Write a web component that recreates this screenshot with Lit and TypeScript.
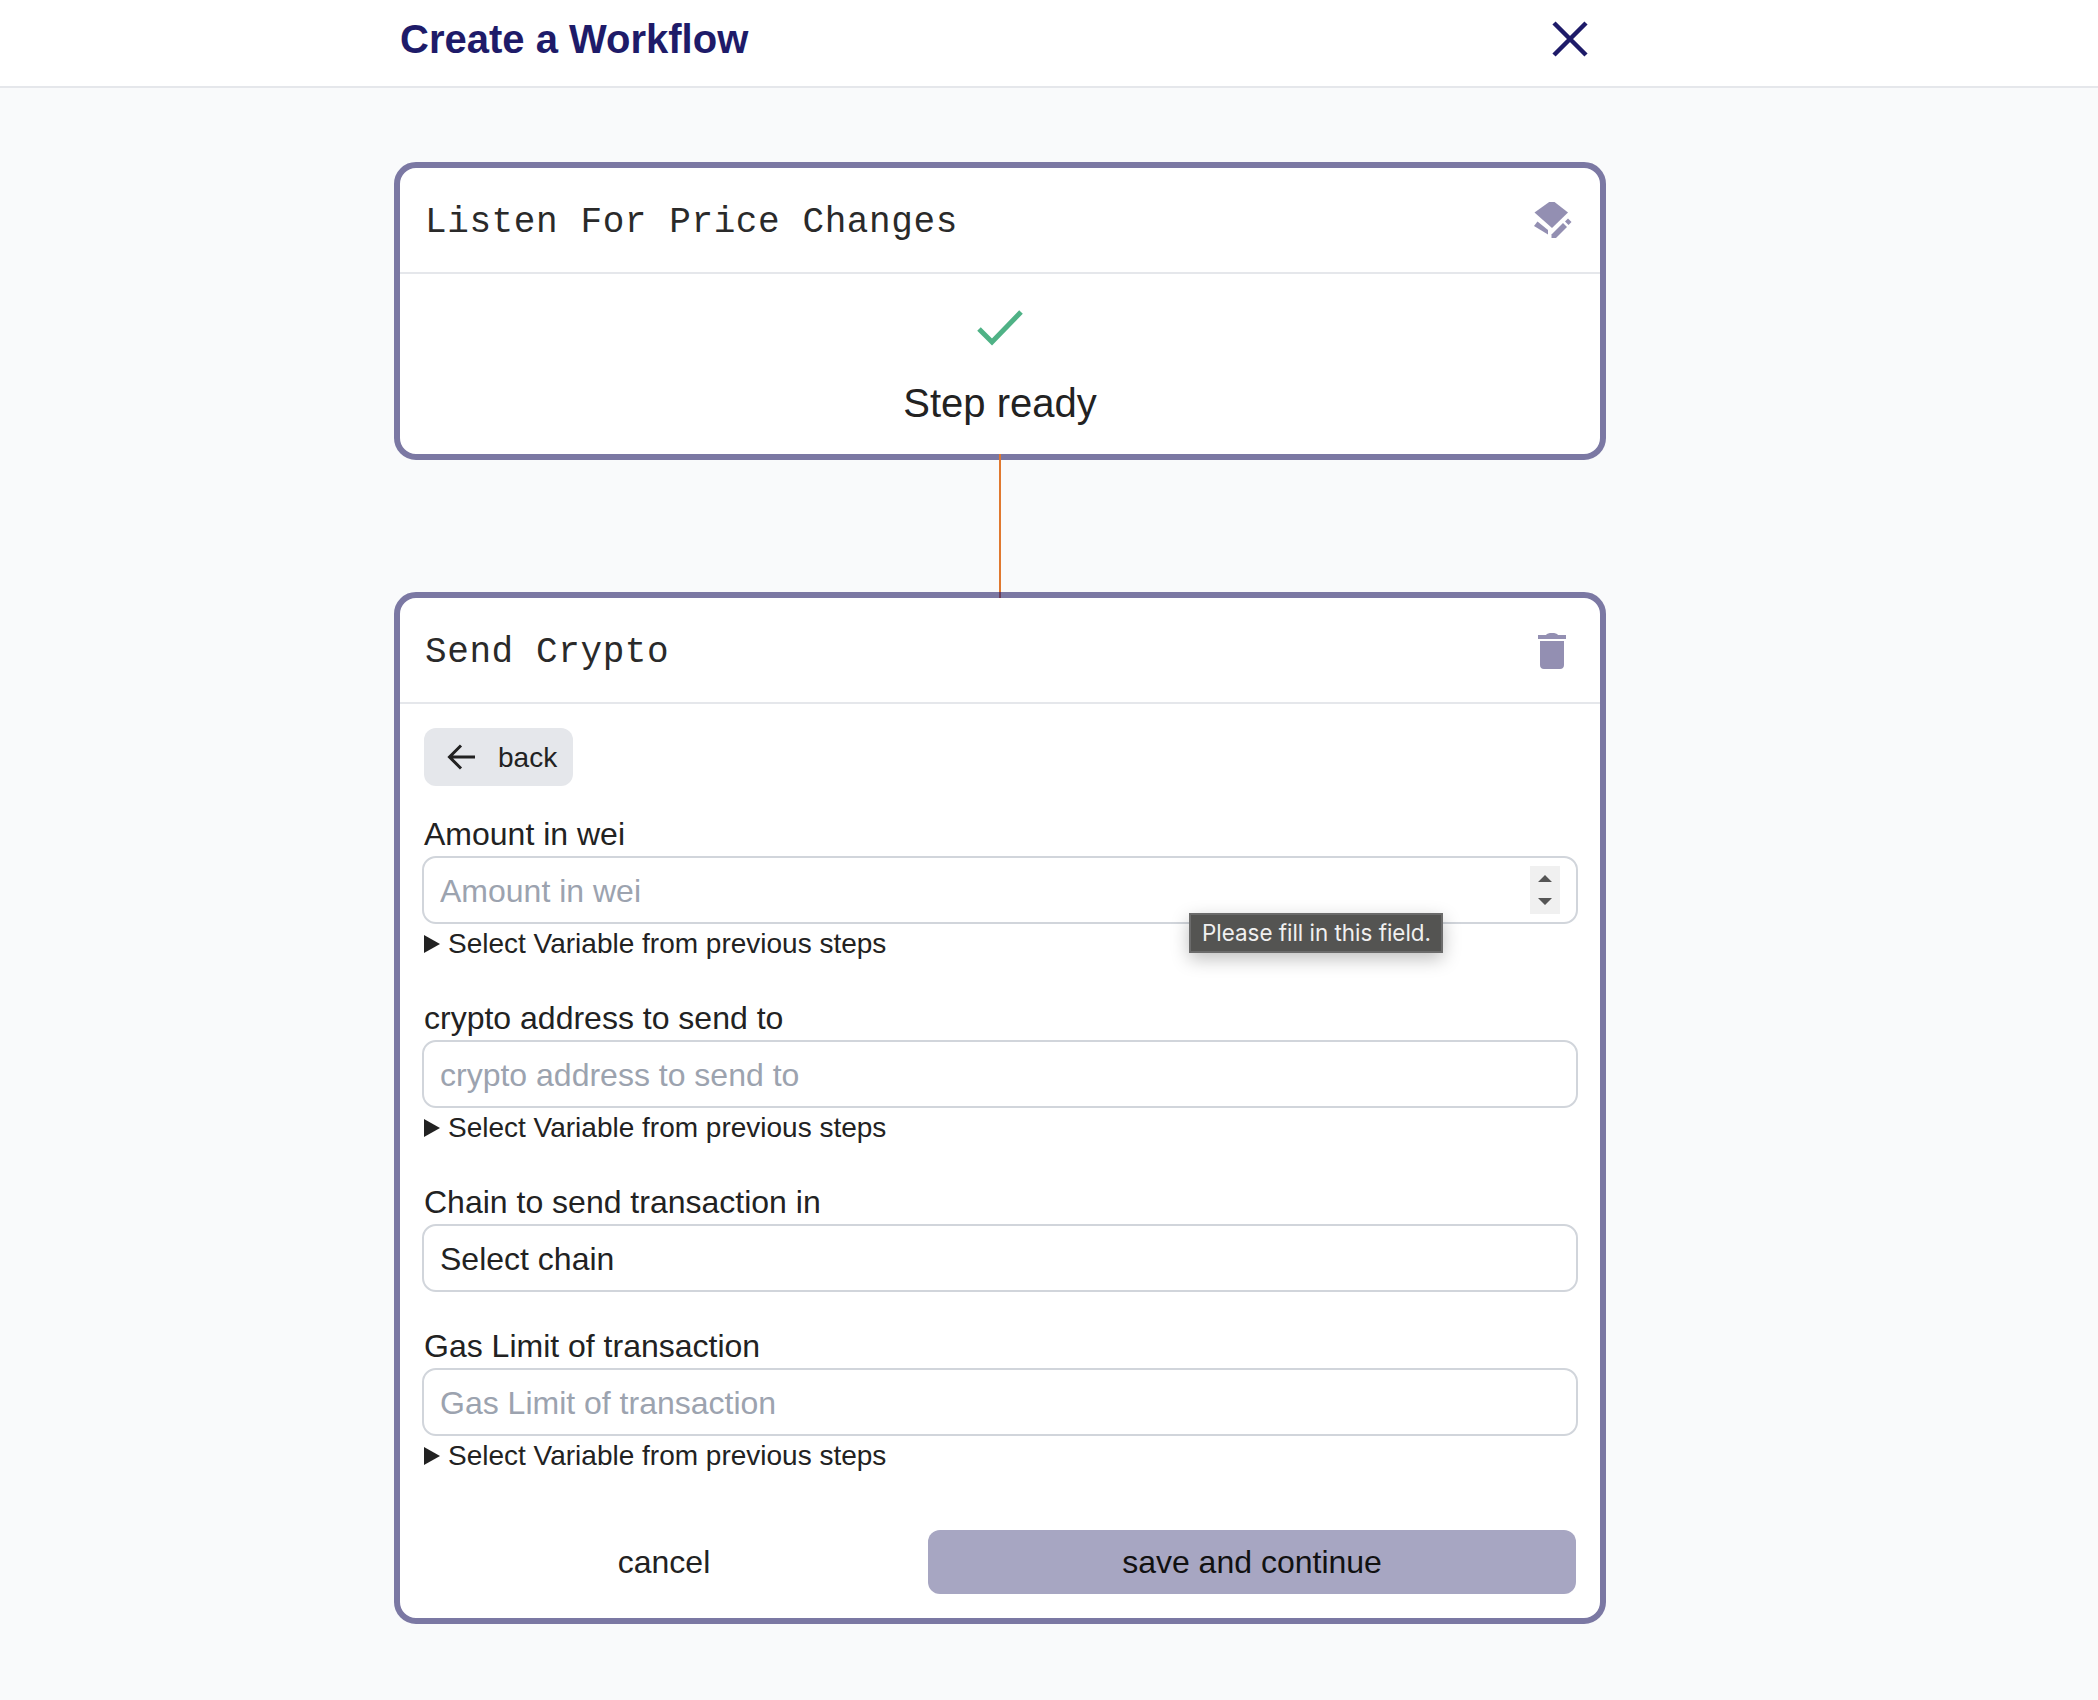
import { LitElement, html, css } from "lit";
import { customElement } from "lit/decorators.js";

const summary = html`<details class="vars"><summary>Select Variable from previous steps</summary></details>`;

@customElement("app-root")
export class AppRoot extends LitElement {
  static styles = css`
    :host {
      display: block;
      min-height: 1700px;
      background: #f9fafb;
      font-family: "Liberation Sans", Arial, sans-serif;
      color: #222;
    }
    * { box-sizing: border-box; }
    .top {
      height: 88px;
      background: #fff;
      border-bottom: 2px solid #e5e7eb;
      padding: 0 492px 8px 400px;
      display: flex;
      align-items: center;
      justify-content: space-between;
    }
    h1 {
      margin: 0;
      font-size: 40px;
      font-weight: 700;
      line-height: 76px;
      color: #1e1b69;
    }
    .close { display: block; width: 40px; height: 40px; margin-right: 16px; }
    main { width: 1212px; margin-left: 394px; padding-top: 74px; }
    .card {
      background: #fff;
      border: 6px solid #7b78a3;
      border-radius: 22px;
    }
    .head {
      height: 106px;
      border-bottom: 2px solid #e5e7eb;
      display: flex;
      align-items: center;
      justify-content: space-between;
      padding: 0 28px 0 25px;
    }
    .head h2 {
      margin: 4px 0 0;
      font-family: "Liberation Mono", monospace;
      font-weight: 400;
      font-size: 36px;
      letter-spacing: 0.6px;
      color: #2a2a2a;
    }
    .head .icon { margin-top: 3px; }
    .ready {
      height: 180px;
      display: flex;
      flex-direction: column;
      align-items: center;
      padding-top: 36px;
    }
    .ready svg { display: block; width: 48px; height: 40px; }
    .ready p { margin: 23px 0 0; font-size: 40px; line-height: 60px; }
    .link { height: 132px; position: relative; }
    .link i {
      position: absolute;
      left: 605px;
      top: -6px;
      width: 2px;
      height: 138px;
      background: #e0782f;
    }
    .link b {
      position: absolute;
      left: 605px;
      bottom: -6px;
      width: 2px;
      height: 6px;
      background: #6b3d5a;
      z-index: 1;
    }
    .form { padding: 24px 24px 24px; }
    .back {
      display: flex;
      align-items: center;
      width: 149px;
      height: 58px;
      border: 0;
      border-radius: 12px;
      background: #e5e7eb;
      padding: 2px 0 0 23px;
      font: 28px "Liberation Sans", Arial, sans-serif;
      color: #222;
      gap: 21px;
      margin-bottom: 24px;
    }
    .back svg { display: block; width: 30px; height: 30px; margin-top: -2px; }
    .field { position: relative; margin-bottom: 30px; }
    label { display: block; font-size: 32px; line-height: 48px; height: 46px; }
    .ctl {
      display: block;
      width: 1156px;
      height: 68px;
      margin-left: -2px;
      border: 2px solid #d1d5db;
      border-radius: 14px;
      background: #fff;
      padding: 2px 16px 0;
      font: 32px "Liberation Sans", Arial, sans-serif;
      color: #222;
      outline: none;
      appearance: none;
    }
    .ctl::placeholder { color: #9ca3af; opacity: 1; }
    .vars { font-size: 28px; line-height: 40px; height: 40px; }
    summary { cursor: pointer; list-style: none; display: flex; align-items: center; gap: 8px; }
    summary::-webkit-details-marker { display: none; }
    summary::before {
      content: "";
      width: 16px;
      height: 18px;
      background: #222;
      clip-path: polygon(0 0, 100% 50%, 0 100%);
    }
    .spin {
      position: absolute;
      left: 1106px;
      top: 56px;
      width: 30px;
      height: 48px;
      background: #f0f0f0;
    }
    .spin svg { display: block; width: 30px; height: 48px; }
    .tip {
      position: absolute;
      left: 765px;
      top: 103px;
      width: 254px;
      height: 40px;
      background: #545452;
      border: 2px solid #6b6b6b;
      color: #f0f0f0;
      font: 22.4px/36px Inter, sans-serif;
      padding-left: 11px;
      white-space: nowrap;
      box-shadow: 0 6px 18px rgba(0, 0, 0, 0.25);
    }
    .foot { display: flex; gap: 24px; margin-top: 54px; }
    .foot button {
      height: 64px;
      border: 0;
      border-radius: 12px;
      background: transparent;
      font: 32px "Liberation Sans", Arial, sans-serif;
      color: #222;
      padding: 0;
    }
    .foot .cancel { width: 480px; }
    .foot .save { width: 648px; background: #a7a6c2; color: #111; }
    .field.last { margin-bottom: 0; }
    .icon { display: block; width: 40px; height: 40px; }
  `;

  render() {
    return html`
      <div class="top">
        <h1>Create a Workflow</h1>
        <svg class="close" viewBox="0 0 40 40" fill="none" stroke="#1e1b69" stroke-width="4.5">
          <path d="M4 4 36 36M36 4 4 36" />
        </svg>
      </div>
      <main>
        <section class="card">
          <div class="head">
            <h2>Listen For Price Changes</h2>
            <svg class="icon" viewBox="-1 3 40 40" fill="#938fb2">
              <polygon points="19,1 35,13.500 19,29 1.500,13.500" />
              <polygon points="1,27 4.500,22.500 15,31 15,35.500" />
              <polygon points="18.500,35.500 30,24 34,28 23,39 18.500,39" />
              <polygon points="32,22.500 35,19.500 38.500,23 35.500,26" />
            </svg>
          </div>
          <div class="ready">
            <svg viewBox="0 0 48 40" fill="none" stroke="#4fb286" stroke-width="5">
              <path d="M3 19 16 32 45 2" />
            </svg>
            <p>Step ready</p>
          </div>
        </section>
        <div class="link"><i></i><b></b></div>
        <section class="card">
          <div class="head">
            <h2>Send Crypto</h2>
            <svg class="icon" viewBox="0 0 40 40" fill="#938fb2">
              <path d="M6 3H14C15 1.500 17 1 20 1S25 1.500 26 3H34V7H6ZM8 9H32V33C32 35.500 30.500 37 28 37H12C9.500 37 8 35.500 8 33Z" />
            </svg>
          </div>
          <div class="form">
            <button class="back">
              <svg viewBox="0 0 30 30" fill="none" stroke="#222" stroke-width="3">
                <path d="M28 15H3M14 3.500 2.500 15 14 26.500" />
              </svg>
              back
            </button>
            <div class="field">
              <label>Amount in wei</label>
              <input class="ctl" type="number" placeholder="Amount in wei" />
              ${summary}
              <div class="spin">
                <svg viewBox="0 0 30 48" fill="#555">
                  <path d="M8 16 15 9 22 16ZM8 32 22 32 15 39Z" />
                </svg>
              </div>
              <div class="tip">Please fill in this field.</div>
            </div>
            <div class="field">
              <label>crypto address to send to</label>
              <input class="ctl" type="text" placeholder="crypto address to send to" />
              ${summary}
            </div>
            <div class="field">
              <label>Chain to send transaction in</label>
              <select class="ctl"><option>Select chain</option></select>
            </div>
            <div class="field last">
              <label>Gas Limit of transaction</label>
              <input class="ctl" type="text" placeholder="Gas Limit of transaction" />
              ${summary}
            </div>
            <div class="foot">
              <button class="cancel">cancel</button>
              <button class="save">save and continue</button>
            </div>
          </div>
        </section>
      </main>
    `;
  }
}
